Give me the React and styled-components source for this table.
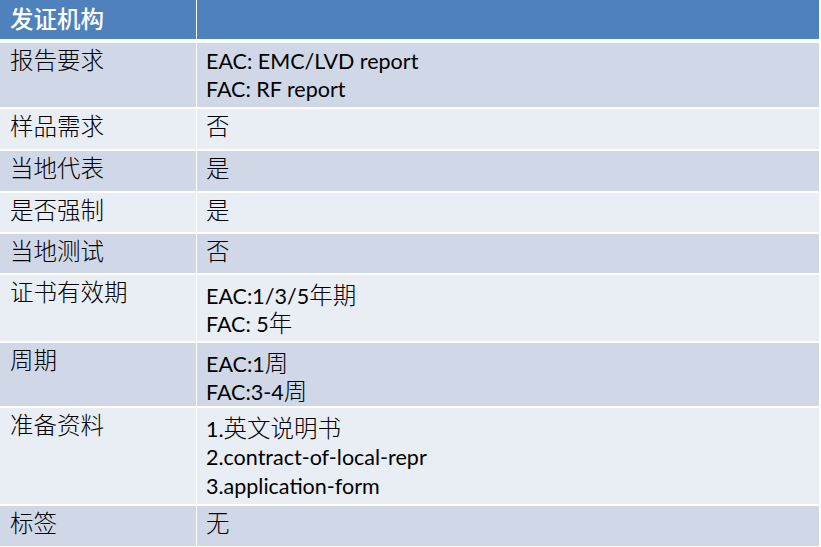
import React from "react";
import styled, { createGlobalStyle } from "styled-components";

const GlobalStyle = createGlobalStyle`
    html, body {
        margin: 0;
        padding: 0;
        background: #ffffff;
    }
    body {
        font-family: Lato, "Liberation Sans", "Noto Sans CJK SC", sans-serif;
    }
`

const rows = [
    { label: "报告要求", h: 64, lines: ["EAC: EMC/LVD report", "FAC: RF report"] },
    { label: "样品需求", h: 40, lines: ["否"] },
    { label: "当地代表", h: 40, lines: ["是"] },
    { label: "是否强制", h: 39, lines: ["是"] },
    { label: "当地测试", h: 39, lines: ["否"] },
    { label: "证书有效期", h: 66, lines: ["EAC:1/3/5年期", "FAC: 5年"] },
    { label: "周期", h: 63, lines: ["EAC:1周", "FAC:3-4周"] },
    { label: "准备资料", h: 96, lines: ["1.英文说明书", "2.contract-of-local-repr", "3.application-form"] },
    { label: "标签", h: 40, lines: ["无"] },
];

const HAN = /[\u3400-\u9fff]/;
const LATIN = /[A-Za-z0-9]/;

const Table = styled.div`
    display: grid;
    grid-template-columns: 196px 622px;
    column-gap: 1px;
    row-gap: 2px;
    width: 819px;
`

const HeadCell = styled.div`
    height: 39px;
    margin-bottom: 2px;
    background: #4f81bd;
    color: #ffffff;
    font-family: "Noto Sans CJK SC", sans-serif;
    font-weight: 500;
    font-size: 23.5px;
    line-height: 36px;
    padding: 0 10px;
    box-sizing: border-box;
`

const Cell = styled.div`
    height: ${p => p.$h}px;
    background: ${p => (p.$odd ? "#d0d8e8" : "#e9edf4")};
    color: #000000;
    padding: ${p => p.$pad}px 10px 0 9px;
    box-sizing: border-box;
    font-size: 21.5px;
    line-height: 28.4px;
    overflow: hidden;
`

const Label = styled(Cell)`
    padding-left: 10px;
    padding-top: 0;
    font-family: "Noto Sans CJK SC", sans-serif;
    font-weight: 300;
    font-size: 23.5px;
    line-height: 32px;
`

const Line = styled.div`
    white-space: nowrap;
`

const Han = styled.span`
    font-family: "Noto Sans CJK SC", sans-serif;
    font-weight: 300;
    font-size: 23.5px;
    line-height: 1;
`

function Mixed({ text }) {
    const parts = text.split(/([\u3400-\u9fff]+)/).filter(Boolean);
    return parts.map((p, i) =>
        HAN.test(p) ? <Han key={i}>{p}</Han> : <span key={i}>{p}</span>
    );
}

function App() {
    return (
        <>
            <GlobalStyle />
            <Table>
                <HeadCell>发证机构</HeadCell>
                <HeadCell />
                {rows.map((r, i) => {
                    const first = r.lines[0];
                    const pad = HAN.test(first) && LATIN.test(first) ? 7 : 4;
                    return (
                        <React.Fragment key={r.label}>
                            <Label $h={r.h} $odd={i % 2 === 0}>{r.label}</Label>
                            <Cell $h={r.h} $odd={i % 2 === 0} $pad={pad}>
                                {r.lines.map(l => (
                                    <Line key={l}><Mixed text={l} /></Line>
                                ))}
                            </Cell>
                        </React.Fragment>
                    );
                })}
            </Table>
        </>
    );
}

export default App;
